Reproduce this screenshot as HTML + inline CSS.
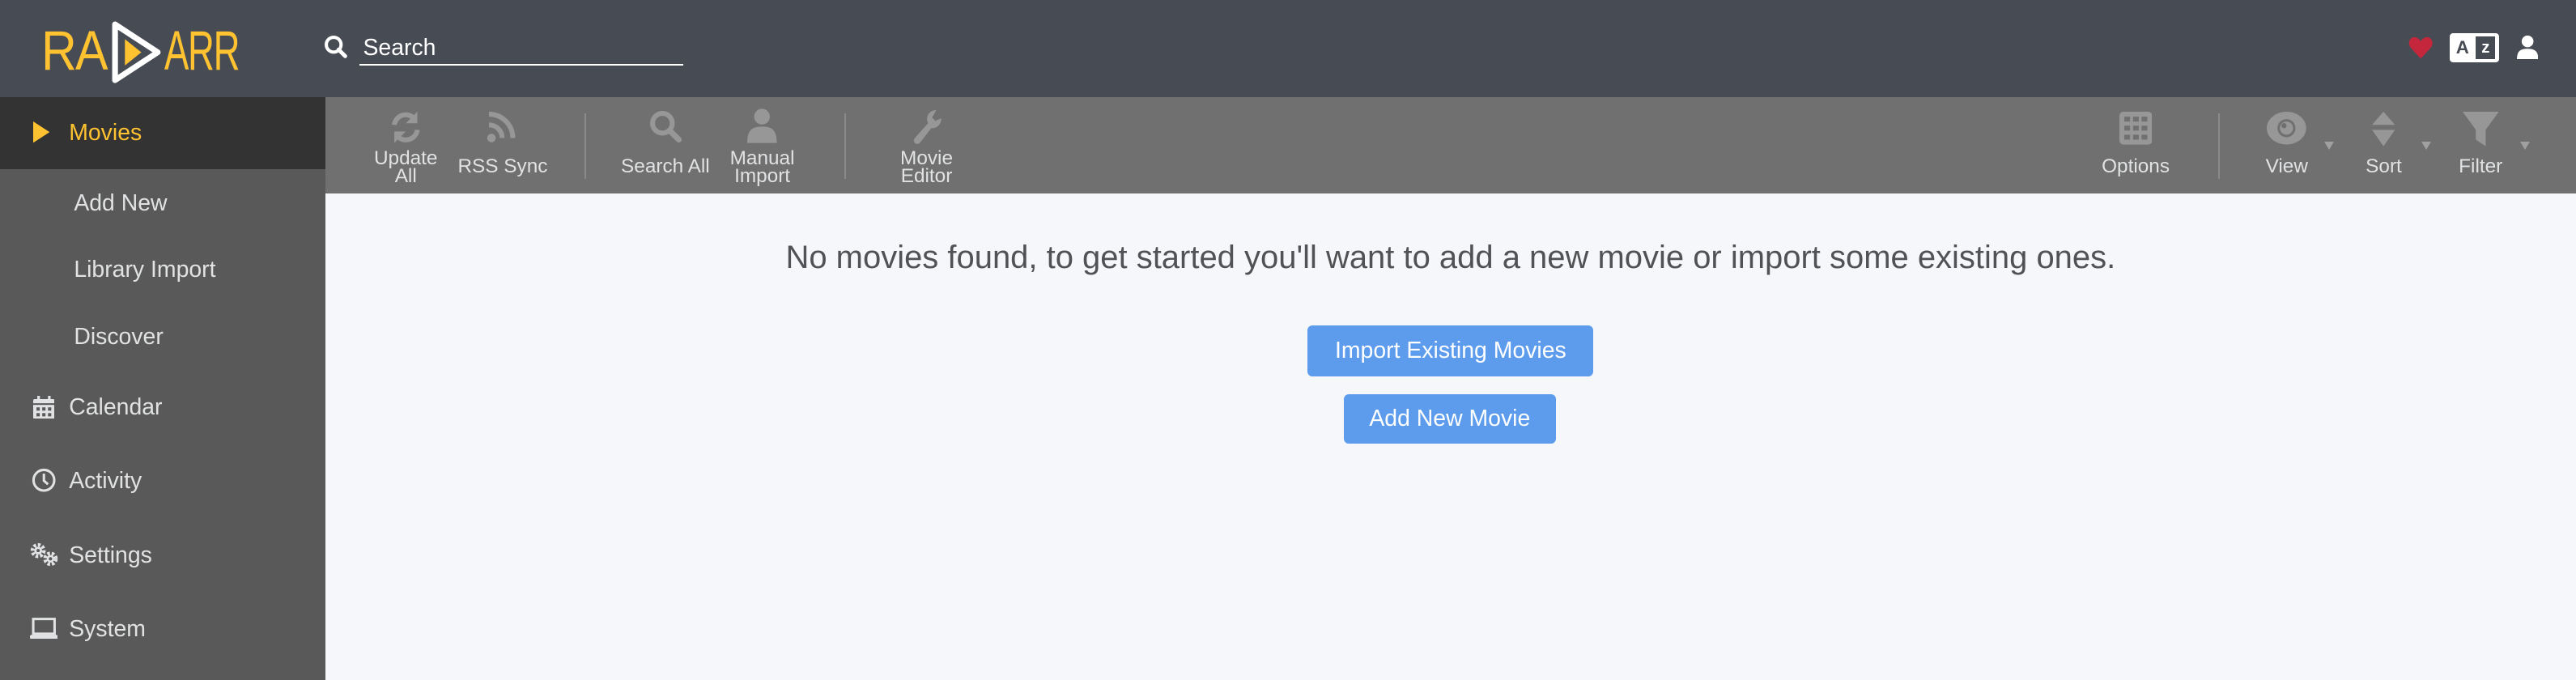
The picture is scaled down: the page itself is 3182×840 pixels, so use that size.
<!DOCTYPE html>
<html><head><meta charset="utf-8"><style>
html,body{margin:0;padding:0;width:3182px;height:840px;overflow:hidden;background:#f5f7fa}
#w{zoom:2.0293;width:1568px;height:414px;position:relative;font-family:"Liberation Sans",sans-serif;overflow:hidden}
.a{position:absolute}
#hdr{left:0;top:0;width:1568px;height:59px;background:#464b54}
#side{left:0;top:59px;width:198px;height:355px;background:#595959}
#tb{left:198px;top:59px;width:1370px;height:59px;background:#707070}
.ni{position:absolute;left:42px;font-size:14px;color:#e1e2e3;line-height:16px}
.sub{left:45px}
.ic{position:absolute;left:18px}
.tl{position:absolute;font-size:12px;color:#e1e2e3;text-align:center;line-height:11px;transform:translateX(-50%);white-space:nowrap}
.tsep{position:absolute;top:10px;width:1px;height:40px;background:#8a8a8a}
.tri{position:absolute;top:86px;width:0;height:0;border-left:3px solid transparent;border-right:3px solid transparent;border-top:5px solid #a0a0a0}
.btn{position:absolute;background:#5d9cec;color:#fff;font-size:14px;border-radius:3px;text-align:center}
.lg{position:absolute;top:0;font:34px/34px 'Liberation Sans',sans-serif;color:#ffc230;transform-origin:left;letter-spacing:-1px}
</style></head><body><div id="w">
<div id="hdr" class="a"></div>
<div class="a" style="left:25px;top:14px;width:120px;height:34px">
<span class="lg" style="left:0;transform:scaleX(.88)">RA</span>
<span class="lg" style="left:75px;transform:scaleX(.66)">ARR</span>
<svg style="position:absolute;left:41px;top:-2px" width="34" height="40" viewBox="0 0 34 40"><path d="M4 3 L4 37 L30 20 Z" fill="none" stroke="#fff" stroke-width="3.5" stroke-linejoin="round"/><path d="M10 12 L10 28 L20 20Z" fill="#ffc230"/></svg>
</div>
<svg class="a" style="left:197px;top:21px" width="15" height="15" viewBox="0 0 15 15"><circle cx="6" cy="6" r="4.5" fill="none" stroke="#fff" stroke-width="2"/><path d="M9 9 L13 13" stroke="#fff" stroke-width="2.4" stroke-linecap="round"/></svg>
<div class="a" style="left:221px;top:21px;font-size:14px;color:#fff">Search</div>
<div class="a" style="left:219px;top:39px;width:197px;height:1px;background:#fff"></div>
<svg class="a" style="left:1466px;top:22px" width="15" height="14" viewBox="0 0 15 14"><path d="M7.5 13.5 L1.5 7 C-1 4 1 0 4.2 0.5 C5.8 0.8 7 2 7.5 3 C8 2 9.2 0.8 10.8 0.5 C14 0 16 4 13.5 7Z" fill="#c4273c"/></svg>
<div class="a" style="left:1491px;top:20px;width:30px;height:18px;background:#fff;border-radius:2px"></div>
<div class="a" style="left:1495px;top:22px;font:bold 11px/14px 'Liberation Sans',sans-serif;color:#464b54">A</div>
<div class="a" style="left:1507px;top:22px;width:12px;height:14px;background:#464b54;color:#fff;font:bold 10px/14px 'Liberation Sans',sans-serif;text-align:center">z</div>
<svg class="a" style="left:1532px;top:21px" width="13" height="15" viewBox="0 0 13 15"><circle cx="6.5" cy="4" r="3.6" fill="#fff"/><path d="M0 15 C0 10 2 8.5 6.5 8.5 C11 8.5 13 10 13 15Z" fill="#fff"/></svg>

<div id="side" class="a">
<div class="a" style="left:0;top:0;width:198px;height:44px;background:#333"></div>
<svg class="ic" style="top:15px;left:20px" width="10" height="13" viewBox="0 0 10 13"><path d="M0 0 L10 6.5 L0 13Z" fill="#ffc230"/></svg>
<div class="ni" style="top:14px;color:#ffc230">Movies</div>
<div class="ni sub" style="top:57px">Add New</div>
<div class="ni sub" style="top:97px">Library Import</div>
<div class="ni sub" style="top:138px">Discover</div>
<svg class="ic" style="top:182px;left:20px" width="13" height="14" viewBox="0 0 13 14"><rect x="0" y="2" width="13" height="12" rx="1" fill="#e1e2e3"/><rect x="2.5" y="0" width="1.6" height="3" fill="#e1e2e3"/><rect x="9" y="0" width="1.6" height="3" fill="#e1e2e3"/><g fill="#595959"><rect x="0" y="4.5" width="13" height="1"/><rect x="2" y="7" width="2" height="2"/><rect x="5.5" y="7" width="2" height="2"/><rect x="9" y="7" width="2" height="2"/><rect x="2" y="10.5" width="2" height="2"/><rect x="5.5" y="10.5" width="2" height="2"/><rect x="9" y="10.5" width="2" height="2"/></g></svg>
<div class="ni" style="top:181px">Calendar</div>
<svg class="ic" style="top:226px;left:19px" width="15" height="15" viewBox="0 0 15 15"><circle cx="7.5" cy="7.5" r="6.3" fill="none" stroke="#e1e2e3" stroke-width="1.5"/><path d="M7.5 3.5 V7.8 L10 10" fill="none" stroke="#e1e2e3" stroke-width="1.5"/></svg>
<div class="ni" style="top:226px">Activity</div>
<svg class="ic" style="top:271px;left:18px" width="18" height="15" viewBox="0 0 18 15"><circle cx="5" cy="5" r="3.5" fill="none" stroke="#e1e2e3" stroke-width="2.2" stroke-dasharray="1.6 1.1"/><circle cx="5" cy="5" r="2.4" fill="#e1e2e3"/><circle cx="5" cy="5" r="1" fill="#595959"/><circle cx="12.5" cy="10" r="3.3" fill="none" stroke="#e1e2e3" stroke-width="2.2" stroke-dasharray="1.6 1.1"/><circle cx="12.5" cy="10" r="2.3" fill="#e1e2e3"/><circle cx="12.5" cy="10" r="1" fill="#595959"/></svg>
<div class="ni" style="top:271px">Settings</div>
<svg class="ic" style="top:317px;left:18px" width="17" height="13" viewBox="0 0 17 13"><rect x="2" y="0.8" width="13" height="9" fill="none" stroke="#e1e2e3" stroke-width="1.5"/><rect x="0" y="10.5" width="17" height="2.5" rx="1" fill="#e1e2e3"/></svg>
<div class="ni" style="top:316px">System</div>
</div>

<div id="tb" class="a">
<svg class="a" style="left:39px;top:8px" width="20" height="21" viewBox="0 0 20 21"><path d="M3 9 A7 7 0 0 1 15 5" fill="none" stroke="#979797" stroke-width="3"/><path d="M17 1 V8 H10Z" fill="#979797"/><path d="M17 12 A7 7 0 0 1 5 16" fill="none" stroke="#979797" stroke-width="3"/><path d="M3 20 V13 H10Z" fill="#979797"/></svg>
<div class="tl" style="left:49px;top:32px">Update<br>All</div>
<svg class="a" style="left:98px;top:8px" width="18" height="20" viewBox="0 0 18 20"><circle cx="3" cy="17" r="2.6" fill="#979797"/><path d="M1.5 9 A8 8 0 0 1 9.5 17" fill="none" stroke="#979797" stroke-width="3"/><path d="M1.5 2.5 A14.5 14.5 0 0 1 16 17" fill="none" stroke="#979797" stroke-width="3"/></svg>
<div class="tl" style="left:108px;top:37px">RSS Sync</div>
<div class="tsep" style="left:158px"></div>
<svg class="a" style="left:197px;top:8px" width="20" height="20" viewBox="0 0 20 20"><circle cx="8" cy="8" r="6" fill="none" stroke="#979797" stroke-width="3"/><path d="M12.5 12.5 L18 18" stroke="#979797" stroke-width="3.5" stroke-linecap="round"/></svg>
<div class="tl" style="left:207px;top:37px">Search All</div>
<svg class="a" style="left:257px;top:7px" width="18" height="21" viewBox="0 0 18 21"><circle cx="9" cy="5" r="4.8" fill="#979797"/><path d="M0 21 C0 13 3 11 9 11 C15 11 18 13 18 21Z" fill="#979797"/></svg>
<div class="tl" style="left:266px;top:32px">Manual<br>Import</div>
<div class="tsep" style="left:316px"></div>
<svg class="a" style="left:356px;top:7px" width="20" height="22" viewBox="0 0 20 22"><path d="M16 1 A5.5 5.5 0 0 0 11 9 L3 18 A2 2 0 0 0 6 21 L13 12 A5.5 5.5 0 0 0 19 6 L15.5 7.5 L13.5 5.5Z" fill="#979797"/></svg>
<div class="tl" style="left:366px;top:32px">Movie<br>Editor</div>

<svg class="a" style="left:1092px;top:9px" width="20" height="20" viewBox="0 0 20 20"><rect width="20" height="20" rx="2.5" fill="#979797"/><g fill="#707070"><rect x="3" y="3" width="3.5" height="3"/><rect x="8.3" y="3" width="3.5" height="3"/><rect x="13.5" y="3" width="3.5" height="3"/><rect x="3" y="8.5" width="3.5" height="3"/><rect x="8.3" y="8.5" width="3.5" height="3"/><rect x="13.5" y="8.5" width="3.5" height="3"/><rect x="3" y="14" width="3.5" height="3"/><rect x="8.3" y="14" width="3.5" height="3"/><rect x="13.5" y="14" width="3.5" height="3"/></g></svg>
<div class="tl" style="left:1102px;top:37px">Options</div>
<div class="tsep" style="left:1152px"></div>
<svg class="a" style="left:1182px;top:9px" width="24" height="20" viewBox="0 0 24 20"><ellipse cx="12" cy="10" rx="12" ry="10" fill="#979797"/><circle cx="12" cy="10" r="5.5" fill="#707070"/><circle cx="12" cy="10" r="4" fill="#979797"/><circle cx="10.5" cy="8.5" r="1.6" fill="#707070"/></svg>
<div class="tl" style="left:1194px;top:37px">View</div>
<div class="tri" style="left:1217px;top:27px"></div>
<svg class="a" style="left:1246px;top:9px" width="14" height="21" viewBox="0 0 14 21"><path d="M7 0 L14 8 H0Z M0 11 H14 L7 21Z" fill="#979797"/></svg>
<div class="tl" style="left:1253px;top:37px">Sort</div>
<div class="tri" style="left:1276px;top:27px"></div>
<svg class="a" style="left:1301px;top:9px" width="22" height="21" viewBox="0 0 22 21"><path d="M0 0 H22 L14 11 V21 L8 17 V11Z" fill="#979797"/></svg>
<div class="tl" style="left:1312px;top:37px">Filter</div>
<div class="tri" style="left:1336px;top:27px"></div>
</div>

<div class="a" style="left:198px;top:146px;width:1370px;text-align:center;font-size:19.7px;color:#515253">No movies found, to get started you'll want to add a new movie or import some existing ones.</div>
<div class="btn" style="left:796px;top:198px;width:174px;height:31px;line-height:31px">Import Existing Movies</div>
<div class="btn" style="left:818px;top:240px;width:129px;height:30px;line-height:30px">Add New Movie</div>
</div></body></html>
